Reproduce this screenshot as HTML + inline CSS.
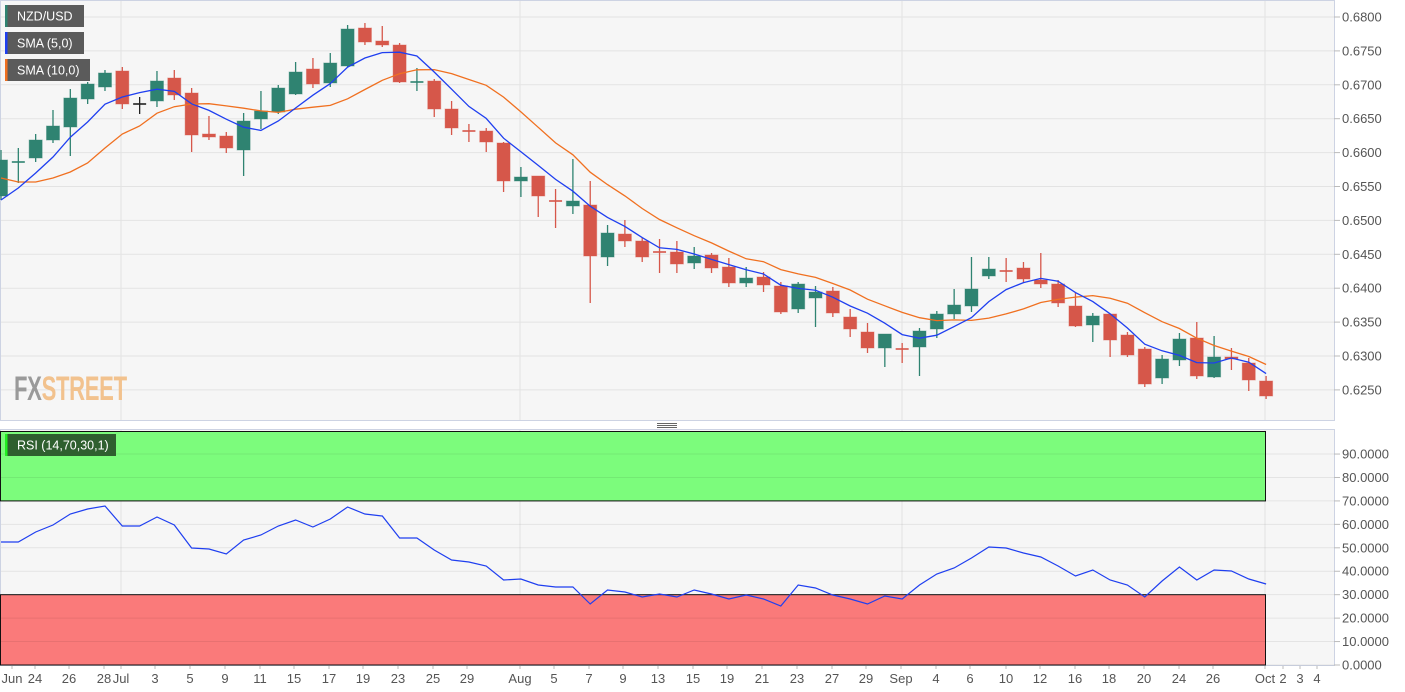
<!DOCTYPE html>
<html><head><meta charset="utf-8">
<style>
html,body{margin:0;padding:0;background:#fff;width:1405px;height:692px;overflow:hidden;font-family:"Liberation Sans",Arial,sans-serif}
svg{display:block}
</style></head>
<body>
<svg id="c" width="1405" height="692" xmlns="http://www.w3.org/2000/svg"></svg>
<script>
var s='';
var G='#2f8371',R='#d6574a';
s+='<rect x="0.5" y="0.5" width="1334" height="420" fill="#f6f6f6" stroke="#cdd3e3"/>';
s+='<rect x="0.5" y="429.5" width="1334" height="236" fill="#f6f6f6" stroke="#cdd3e3"/>';
var pl=['0.6800','0.6750','0.6700','0.6650','0.6600','0.6550','0.6500','0.6450','0.6400','0.6350','0.6300','0.6250'];
for(var k=0;k<12;k++){var y=17+33.9*k;
s+='<line x1="1" x2="1334" y1="'+y+'" y2="'+y+'" stroke="#e3e3e3"/>';
s+='<line x1="1334" x2="1340" y1="'+y+'" y2="'+y+'" stroke="#bbb"/>';
s+='<text x="1342" y="'+(y+4.5)+'" font-size="13" fill="#555">'+pl[k]+'</text>';}
[121,520,902,1265].forEach(function(x){s+='<line x1="'+x+'" x2="'+x+'" y1="1" y2="420" stroke="#e3e3e3"/><line x1="'+x+'" x2="'+x+'" y1="430" y2="665" stroke="#e3e3e3"/>';});
s+='<text x="14" y="400" font-size="34" font-weight="bold" transform="translate(14 0) scale(0.65 1) translate(-14 0)" letter-spacing="-0.5"><tspan fill="#9a9a9a">FX</tspan><tspan fill="#f2c28e">STREET</tspan></text>';
var C=[[160,196,150,200,'g'],[162,162,148,183,'g',1],[140,158,134,162,'g'],[126,140,110,143,'g'],[98,127,89,156,'g'],[84,99,82,104,'g'],[73,87,70,91,'g'],[71,104,67,109,'r'],[104,104,97,114,'k',1],[81,101,71,107,'g'],
[78,95,70,100,'r'],[93,135,88,152,'r'],[134,137,116,140,'r'],[136,148,132,153,'r'],[121,150,113,176,'g'],[111,119,91,129,'g'],[88,112,85,114,'g'],[72,94,62,95,'g'],[69,84,58,88,'r'],[63,83,53,87,'g'],
[29,66,25,67,'g'],[28,42,23,45,'r'],[41,45,26,47,'r'],[45,82,43,83,'r'],[82,82,68,91,'g',1],[81,109,79,117,'r'],[109,128,101,135,'r'],[131,131,124,142,'r',1],[131,142,128,152,'r'],[143,181,142,192,'r'],
[177,181,167,197,'g'],[176,196,176,217,'r'],[201,201,189,228,'r',1],[201,206,159,214,'g'],[205,256,181,303,'r'],[233,257,225,266,'g'],[234,241,220,247,'r'],[241,257,238,262,'r'],[252,252,239,273,'r',1],[252,264,241,273,'r'],
[256,263,247,269,'g'],[255,268,253,273,'r'],[267,283,258,287,'r'],[278,283,267,287,'g'],[277,285,272,292,'r'],[286,312,282,314,'r'],[284,309,282,313,'g'],[292,298,286,327,'g'],[291,313,287,317,'r'],[317,329,309,337,'r'],
[332,348,323,353,'r'],[334,348,334,367,'g'],[349,349,343,363,'r',1],[331,347,328,376,'g'],[314,329,311,338,'g'],[305,314,289,319,'g'],[289,306,257,312,'g'],[269,276,257,279,'g'],[271,271,258,282,'r',1],[268,279,262,283,'r'],
[280,284,253,288,'r'],[284,303,280,307,'r'],[306,326,293,327,'r'],[316,325,313,342,'g'],[314,340,314,357,'r'],[335,355,332,357,'r'],[349,384,347,387,'r'],[359,378,355,384,'g'],[339,360,333,366,'g'],[338,376,322,379,'r'],
[357,377,336,378,'g'],[357,359,348,370,'r'],[363,380,358,391,'r'],[381,396,376,399,'r']];
function X(i){return 1+17.33*i;}
var closes=[];
C.forEach(function(c,i){var x=X(i);var col=c[4]=='g'?G:(c[4]=='r'?R:'#222');
closes.push(c[4]=='g'?c[0]:c[1]);
s+='<line x1="'+x+'" x2="'+x+'" y1="'+c[2]+'" y2="'+c[3]+'" stroke="'+col+'" stroke-width="1.3"/>';
if(c[5]){s+='<line x1="'+(x-6.5)+'" x2="'+(x+6.5)+'" y1="'+c[0]+'" y2="'+c[0]+'" stroke="'+col+'" stroke-width="1.6"/>';}
else{var h=Math.max(2,c[1]-c[0]);s+='<rect x="'+(x-6.5)+'" y="'+c[0]+'" width="13" height="'+h+'" fill="'+col+'" stroke="'+col+'" stroke-opacity="0.4"/>';}
});
closes[0]=160;
function sma(n,early){var p=[];for(var i=0;i<C.length;i++){var v;if(i<early.length)v=early[i];else{var t=0;for(var j=i-n+1;j<=i;j++)t+=closes[j];v=t/n;}p.push(X(i).toFixed(1)+','+v.toFixed(1));}return p.join(' ');}
s+='<polyline fill="none" stroke="#f07020" stroke-width="1.3" points="'+sma(10,[178,182,182,178,172,163,148,134,126])+'"/>';
s+='<polyline fill="none" stroke="#1f3ff0" stroke-width="1.3" points="'+sma(5,[200,188,173,157])+'"/>';
function leg(y,w,col,t){s+='<rect x="5" y="'+y+'" width="'+w+'" height="22" fill="#5b5b5b"/><rect x="5" y="'+y+'" width="2.5" height="22" fill="'+col+'"/><text x="17" y="'+(y+15.5)+'" font-size="12.5" fill="#fff">'+t+'</text>';}
leg(5,79,G,'NZD/USD');leg(32,79,'#1f3ff0','SMA (5,0)');leg(59,85,'#f07020','SMA (10,0)');
for(var g=0;g<3;g++){s+='<line x1="657" x2="677" y1="'+(423.5+g*2)+'" y2="'+(423.5+g*2)+'" stroke="#666"/>';}
function ry(v){return 665-v*2.344;}
s+='<rect x="0.5" y="431.5" width="1265" height="'+(ry(70)-431.5)+'" fill="#7cfc7c" stroke="#111"/>';
s+='<rect x="0.5" y="'+ry(30)+'" width="1265" height="'+(665-ry(30))+'" fill="#fa7a7a" stroke="#111"/>';
var rl=['90.0000','80.0000','70.0000','60.0000','50.0000','40.0000','30.0000','20.0000','10.0000','0.0000'];
for(var k=0;k<10;k++){var v=90-10*k,y=ry(v);
s+='<line x1="1" x2="1334" y1="'+y+'" y2="'+y+'" stroke="#000" stroke-opacity="0.07"/>';
s+='<line x1="1334" x2="1340" y1="'+y+'" y2="'+y+'" stroke="#bbb"/>';
s+='<text x="1342" y="'+(y+4.5)+'" font-size="13" fill="#555">'+rl[k]+'</text>';}
var rs=[542,542,532,525,514,509,506,526,526,517,525,548,549,554,540,535,526,520,527,519,507,514,516,538,538,550,560,562,566,580,579,585,587,587,604,590,592,597,594,597,590,594,599,595,599,606,585,588,595,599,604,596,599,585,574,568,558,547,548,553,557,566,576,570,580,585,597,581,567,580,570,571,579,584];
s+='<polyline fill="none" stroke="#1f3ff0" stroke-width="1.2" points="'+rs.map(function(y,i){return X(i).toFixed(1)+','+y;}).join(' ')+'"/>';
s+='<rect x="5" y="434" width="111" height="22" fill="#2f5f2f"/><rect x="5" y="434" width="2.5" height="22" fill="#22ee22"/><text x="17" y="449.5" font-size="12.5" fill="#fff">RSI (14,70,30,1)</text>';
var L=[['Jun',12],['24',35],['26',69],['28',104],['Jul',121],['3',155],['5',190],['9',225],['11',260],['15',294],['17',329],['19',363],['23',398],['25',433],['29',467],['Aug',520],['5',554],['7',589],['9',623],['13',658],['15',693],['19',727],['21',762],['23',797],['27',832],['29',866],['Sep',901],['4',936],['6',970],['10',1006],['12',1040],['16',1075],['18',1109],['20',1144],['24',1179],['26',1213],['Oct',1265],['2',1283],['3',1300],['4',1317]];
L.forEach(function(l){s+='<line x1="'+l[1]+'" x2="'+l[1]+'" y1="666" y2="669" stroke="#bbb"/><text x="'+l[1]+'" y="683" font-size="13" fill="#555" text-anchor="middle">'+l[0]+'</text>';});
document.getElementById('c').innerHTML=s;
</script>
</body></html>
